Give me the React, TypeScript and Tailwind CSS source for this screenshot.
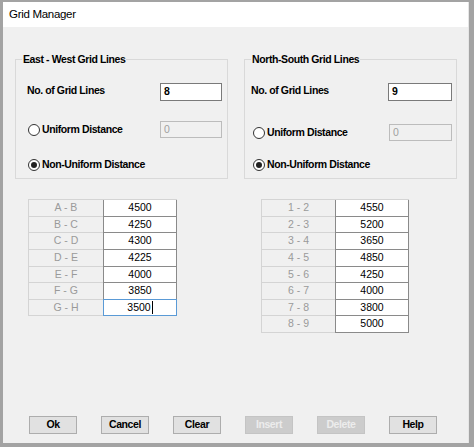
import React from 'react';

const font = { fontFamily: '"Liberation Sans", Arial, sans-serif' };

// row heights so that 8 rows take 133px like the original
const rowHeights = ['h-[17px]', 'h-[16px]', 'h-[17px]', 'h-[17px]', 'h-[16px]', 'h-[17px]', 'h-[16px]', 'h-[17px]'];

const ewRows = [
  { label: 'A - B', value: '4500' },
  { label: 'B - C', value: '4250' },
  { label: 'C - D', value: '4300' },
  { label: 'D - E', value: '4225' },
  { label: 'E - F', value: '4000' },
  { label: 'F - G', value: '3850' },
  { label: 'G - H', value: '3500' },
];

const nsRows = [
  { label: '1 - 2', value: '4550' },
  { label: '2 - 3', value: '5200' },
  { label: '3 - 4', value: '3650' },
  { label: '4 - 5', value: '4850' },
  { label: '5 - 6', value: '4250' },
  { label: '6 - 7', value: '4000' },
  { label: '7 - 8', value: '3800' },
  { label: '8 - 9', value: '5000' },
];

const Radio: React.FC<{ checked?: boolean; label: string }> = ({ checked, label }) => (
  <div className="flex items-center gap-[2px]">
    <span className="flex h-[12px] w-[12px] items-center justify-center rounded-full border border-[#333] bg-white">
      {checked && <span className="h-[6px] w-[6px] rounded-full bg-[#222]" />}
    </span>
    <span className="text-[10.5px] font-bold tracking-[-0.4px] text-black">{label}</span>
  </div>
);

const GridTable: React.FC<{ rows: { label: string; value: string }[]; focusLast?: boolean; labelW: string }> = ({
  rows,
  focusLast,
  labelW,
}) => (
  <div className="flex flex-col border-t border-[#d4d4d4]">
    {rows.map((r, i) => {
      const focused = focusLast && i === rows.length - 1;
      return (
        <div key={r.label} className={`flex ${rowHeights[i]}`}>
          <div
            className={`${labelW} flex items-center justify-center border-b border-l border-[#d4d4d4] bg-[#f0f0f0] text-[10.5px] text-[#9a9a9a]`}
          >
            {r.label}
          </div>
          <div
            className={
              focused
                ? 'relative -mt-px flex w-[74px] items-center justify-center border border-[#5a9ad6] bg-white text-[10.5px] text-black'
                : 'flex w-[74px] items-center justify-center border-x border-b border-[#8a8a8a] bg-white text-[10.5px] text-black'
            }
          >
            {r.value}
            {focused && <span className="ml-px h-[13px] w-px bg-black" />}
          </div>
        </div>
      );
    })}
  </div>
);

const Button: React.FC<{ label: string; disabled?: boolean }> = ({ label, disabled }) => (
  <div
    className={
      disabled
        ? 'flex h-[18px] w-[48px] items-center justify-center border border-[#c4c4c4] bg-[#cccccc] text-[10.5px] font-bold tracking-[-0.4px] text-[#ececec]'
        : 'flex h-[18px] w-[48px] items-center justify-center border border-[#adadad] bg-[#e1e1e1] text-[10.5px] font-bold tracking-[-0.4px] text-black'
    }
  >
    {label}
  </div>
);

export default function App() {
  return (
    <div className="h-[447px] w-[474px] bg-[#a3a3a3] pb-[4px] pl-[3px] pr-[5px] pt-[2px]" style={font}>
      <div className="flex h-full flex-col border-r border-[#e6e6e6] bg-[#f0f0f0]">
        {/* Title bar */}
        <div className="flex h-[25px] items-center bg-white pl-[6px] text-[11.5px] tracking-[-0.3px] text-black">
          Grid Manager
        </div>

        {/* Group boxes */}
        <div className="flex gap-[16px] pl-[12px] pt-[32px]">
          {/* East - West */}
          <div className="relative h-[120px] w-[213px] border border-[#d9d9d9]">
            <span className="absolute -top-[8px] left-[6px] bg-[#f0f0f0] px-[1px] text-[10.5px] font-bold tracking-[-0.4px] text-black">
              East - West Grid Lines
            </span>
            <div className="mt-[23px] flex h-[18px] items-center pl-[11px] pr-[5px]">
              <span className="mb-[3px] text-[10.5px] font-bold tracking-[-0.4px] text-black">No. of Grid Lines</span>
              <div className="ml-auto flex h-[18px] w-[62px] items-center border border-[#7a7a7a] bg-white pl-[3px] text-[10.5px] font-bold text-black">
                8
              </div>
            </div>
            <div className="mt-[20px] flex h-[17px] items-center pl-[12px] pr-[5px]">
              <Radio label="Uniform Distance" />
              <div className="ml-auto flex h-[17px] w-[62px] items-center border border-[#bcbcbc] bg-[#f0f0f0] pl-[3px] text-[10.5px] text-[#a0a0a0]">
                0
              </div>
            </div>
            <div className="mt-[18px] flex h-[17px] items-center pl-[12px]">
              <Radio checked label="Non-Uniform Distance" />
            </div>
          </div>

          {/* North - South */}
          <div className="relative h-[120px] w-[213px] border border-[#d9d9d9]">
            <span className="absolute -top-[8px] left-[6px] bg-[#f0f0f0] px-[1px] text-[10.5px] font-bold tracking-[-0.4px] text-black">
              North-South Grid Lines
            </span>
            <div className="mt-[23px] flex h-[18px] items-center pl-[6px] pr-[4px]">
              <span className="mb-[3px] text-[10.5px] font-bold tracking-[-0.4px] text-black">No. of Grid Lines</span>
              <div className="ml-auto flex h-[18px] w-[64px] items-center border border-[#7a7a7a] bg-white pl-[3px] text-[10.5px] font-bold text-black">
                9
              </div>
            </div>
            <div className="mt-[23px] flex h-[17px] items-center pl-[8px] pr-[4px]">
              <Radio label="Uniform Distance" />
              <div className="ml-auto flex h-[17px] w-[63px] items-center border border-[#bcbcbc] bg-[#f0f0f0] pl-[3px] text-[10.5px] text-[#a0a0a0]">
                0
              </div>
            </div>
            <div className="mt-[15px] flex h-[17px] items-center pl-[8px]">
              <Radio checked label="Non-Uniform Distance" />
            </div>
          </div>
        </div>

        {/* Spacing tables */}
        <div className="flex items-start pl-[25px] pt-[20px]">
          <GridTable rows={ewRows} focusLast labelW="w-[75px]" />
          <div className="ml-[84px]">
            <GridTable rows={nsRows} labelW="w-[74px]" />
          </div>
        </div>

        {/* Buttons */}
        <div className="mt-auto flex gap-[24px] pb-[9px] pl-[26px]">
          <Button label="Ok" />
          <Button label="Cancel" />
          <Button label="Clear" />
          <Button label="Insert" disabled />
          <Button label="Delete" disabled />
          <Button label="Help" />
        </div>
      </div>
    </div>
  );
}
